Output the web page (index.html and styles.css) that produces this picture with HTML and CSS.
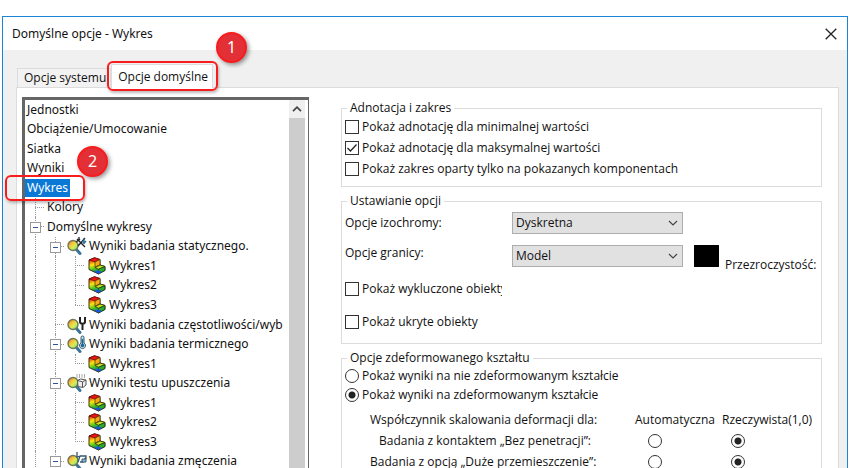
FILE: index.html
```html
<!DOCTYPE html>
<html lang="pl">
<head>
<meta charset="utf-8">
<title>Domyślne opcje - Wykres</title>
<link rel="stylesheet" href="styles.css">
</head>
<body>
<svg class="defs" aria-hidden="true">
  <defs>
    <linearGradient id="lens" x1="0" y1="0" x2="1" y2="1">
      <stop offset="0" stop-color="#f04a3c"/><stop offset=".35" stop-color="#f8c23a"/>
      <stop offset=".6" stop-color="#d8ee50"/><stop offset="1" stop-color="#4ccfb0"/>
    </linearGradient>
    <linearGradient id="heat" x1="0" y1="0" x2=".35" y2="1">
      <stop offset="0" stop-color="#e81010"/><stop offset=".25" stop-color="#f06a10"/>
      <stop offset=".45" stop-color="#f8e810"/><stop offset=".75" stop-color="#38c020"/>
      <stop offset="1" stop-color="#1048d8"/>
    </linearGradient>
    <symbol id="glass" viewBox="0 0 20 18">
      <path d="M9 12l4 4.500" stroke="#3a7498" stroke-width="3" stroke-linecap="round"/>
      <circle cx="6" cy="8.500" r="5" fill="url(#lens)" stroke="#6b7a58" stroke-width="1.400"/>
    </symbol>
    <symbol id="plot" viewBox="0 0 20 18">
      <path d="M2 3L7.500.8 13 2.500V8l5 1.500v4L11.500 17 2 12.500z" fill="url(#heat)" stroke="#3a3010"/>
      <path d="M2 3L7.500.8 13 2.500 8 5z" fill="#f01414" stroke="#701010" stroke-width=".8"/>
      <path d="M8 5l5-2.500V8l-3 1.200-2 1.300z" fill="#f8a818" stroke="#403808" stroke-width=".7"/>
      <path d="M8 10.500l3.500 1.800L18 9.500 13 8z" fill="#c8e020" stroke="#403808" stroke-width=".9"/>
      <path d="M11.500 12.300v4.500l6.300-3.300V9.700z" fill="#2cab2c" stroke="#184820" stroke-width=".8"/>
      <path d="M7.500 14.800l4 2 3.500-1.700-3.500-1.500z" fill="#1a55dc"/>
    </symbol>
  </defs>
</svg>

<main class="window">
  <header class="titlebar">
    <h1>Domyślne opcje - Wykres</h1>
    <button class="close" type="button" aria-label="Zamknij">
      <svg viewBox="0 0 12 12" width="12" height="12"><path d="M.7.7l10.600 10.600M11.300.7L.7 11.300" stroke="#222" stroke-width="1.300"/></svg>
    </button>
  </header>

  <div class="client">
    <nav class="tabs">
      <button class="tab" type="button">Opcje systemu</button>
      <div class="tab-wrap">
        <button class="tab active" type="button">Opcje domyślne</button>
        <span class="frame frame-tab"></span>
        <span class="badge badge-tab">1</span>
      </div>
    </nav>

    <section class="page">
      <div class="tree">
        <ul class="rows">
          <li><span class="text">Jednostki</span></li>
          <li><span class="text">Obciążenie/Umocowanie</span></li>
          <li><span class="text">Siatka</span></li>
          <li><span class="text">Wyniki</span></li>
          <li><span class="text selected">Wykres</span></li>
          <li><i class="line tee"></i><span class="text">Kolory</span></li>
          <li><i class="line tee box"></i><span class="text">Domyślne wykresy</span></li>
          <li><i class="line"></i><i class="line tee box"></i><svg class="icon" viewBox="0 0 20 18"><use href="#glass"/><path d="M10 2l8 8M18 1l-7 8M12 0v4M9 5l4-3" stroke="#222" stroke-width="1.300" fill="none"/><path d="M17 1v5M15 4l2 2.500L19 4" stroke="#2b6f9a" stroke-width="1.300" fill="none"/></svg><span class="text">Wyniki badania statycznego.</span></li>
          <li><i class="line"></i><i class="line"></i><i class="line tee"></i><svg class="icon"><use href="#plot"/></svg><span class="text">Wykres1</span></li>
          <li><i class="line"></i><i class="line"></i><i class="line tee"></i><svg class="icon"><use href="#plot"/></svg><span class="text">Wykres2</span></li>
          <li><i class="line"></i><i class="line"></i><i class="line tee last"></i><svg class="icon"><use href="#plot"/></svg><span class="text">Wykres3</span></li>
          <li><i class="line"></i><i class="line tee"></i><svg class="icon" viewBox="0 0 20 18"><use href="#glass"/><path d="M13 1v4.500c0 3 5 3 5 0V1M15.500 8v6" stroke="#222" stroke-width="2" fill="none"/></svg><span class="text">Wyniki badania częstotliwości/wyb</span></li>
          <li><i class="line"></i><i class="line tee box"></i><svg class="icon" viewBox="0 0 20 18"><use href="#glass"/><path d="M14 2.500a1.500 1.500 0 013 0V8a3 3 0 11-3 0z" fill="#bcdcea" stroke="#35586c"/><path d="M15.500 4v6.500" stroke="#1c6690" stroke-width="1.500"/><circle cx="15.500" cy="10.500" r="1.700" fill="#1c6690"/></svg><span class="text">Wyniki badania termicznego</span></li>
          <li><i class="line"></i><i class="line"></i><i class="line tee last"></i><svg class="icon"><use href="#plot"/></svg><span class="text">Wykres1</span></li>
          <li><i class="line"></i><i class="line tee box"></i><svg class="icon" viewBox="0 0 20 18"><use href="#glass"/><path d="M10.500 6.500l3-1.500 5.500 1v5l-3 2.500-5-1zM10.500 6.500l5 1.300L19 6M15.500 8v5" fill="#eee" stroke="#555"/><path d="M10 .5v3M12.500.5v3M15 .5v3M17.500.5v3" stroke="#555" stroke-dasharray="1 1"/></svg><span class="text">Wyniki testu upuszczenia</span></li>
          <li><i class="line"></i><i class="line"></i><i class="line tee"></i><svg class="icon"><use href="#plot"/></svg><span class="text">Wykres1</span></li>
          <li><i class="line"></i><i class="line"></i><i class="line tee"></i><svg class="icon"><use href="#plot"/></svg><span class="text">Wykres2</span></li>
          <li><i class="line"></i><i class="line"></i><i class="line tee last"></i><svg class="icon"><use href="#plot"/></svg><span class="text">Wykres3</span></li>
          <li><i class="line"></i><i class="line tee box"></i><svg class="icon" viewBox="0 0 20 18"><use href="#glass"/><path d="M10 0v5l3-1M13 4h6v3M13 4l-2 6M19 5l-3 5h-3" stroke="#35586c" stroke-width="1.300" fill="none"/><path d="M15 7h4v3h-4z" fill="#8dbad0" stroke="#35586c"/></svg><span class="text">Wyniki badania zmęczenia</span></li>
        </ul>
        <div class="scrollbar">
          <button type="button" aria-label="W górę"><svg viewBox="0 0 10 6" width="10" height="6"><path d="M1 5.200l4-4 4 4" stroke="#444" stroke-width="1.700" fill="none"/></svg></button>
          <div class="thumb"></div>
        </div>
        <span class="frame frame-row"></span>
        <span class="badge badge-row">2</span>
      </div>

      <form class="form">
        <fieldset class="checks">
          <legend>Adnotacja i zakres</legend>
          <label><input type="checkbox">Pokaż adnotację dla minimalnej wartości</label>
          <label><input type="checkbox" checked>Pokaż adnotację dla maksymalnej wartości</label>
          <label><input type="checkbox">Pokaż zakres oparty tylko na pokazanych komponentach</label>
        </fieldset>

        <fieldset class="settings">
          <legend>Ustawianie opcji</legend>
          <div class="setting">
            <label for="iso">Opcje izochromy:</label>
            <select id="iso"><option>Dyskretna</option></select>
          </div>
          <div class="setting">
            <label class="top" for="edge">Opcje granicy:</label>
            <select id="edge"><option>Model</option></select>
            <button class="swatch" type="button" aria-label="Kolor"></button>
            <span class="opacity">Przezroczystość:</span>
          </div>
          <label><input type="checkbox"><span class="cut">Pokaż wykluczone obiekty</span></label>
          <label><input type="checkbox">Pokaż ukryte obiekty</label>
        </fieldset>

        <fieldset class="shape">
          <legend>Opcje zdeformowanego kształtu</legend>
          <label><input type="radio" name="shape">Pokaż wyniki na nie zdeformowanym kształcie</label>
          <label><input type="radio" name="shape" checked>Pokaż wyniki na zdeformowanym kształcie</label>
          <table>
            <tr><th>Współczynnik skalowania deformacji dla:</th><th>Automatyczna</th><th>Rzeczywista(1,0)</th></tr>
            <tr><td>Badania z kontaktem „Bez penetracji”:</td><td><input type="radio" name="contact" aria-label="Automatyczna"></td><td><input type="radio" name="contact" aria-label="Rzeczywista" checked></td></tr>
            <tr><td>Badania z opcją „Duże przemieszczenie”:</td><td><input type="radio" name="large" aria-label="Automatyczna"></td><td><input type="radio" name="large" aria-label="Rzeczywista" checked></td></tr>
          </table>
        </fieldset>
      </form>
    </section>
  </div>
</main>
</body>
</html>
```
FILE: styles.css
```css
* { box-sizing: border-box; }

body {
  margin: 0;
  height: 100vh;
  overflow: hidden;
  background: #fff;
  color: #111;
  font: 12px/16px "Noto Sans", "Open Sans", sans-serif;
}

button, select, input { font: inherit; color: inherit; margin: 0; }
button { border: 0; padding: 0; background: none; }
.defs { position: absolute; width: 0; height: 0; }

.window {
  display: flex;
  flex-direction: column;
  height: 100vh;
  margin: 0 2px;
  padding-top: 16px;
}

.titlebar {
  display: flex;
  flex: none;
  align-items: center;
  justify-content: space-between;
  height: 34px;
  padding: 0 10px 0 9px;
  border: 1px solid #1a86d9;
  border-bottom: 0;
}
.titlebar h1 { margin: 0; font-size: 12px; font-weight: 400; }
.close { display: flex; }

.client {
  display: flex;
  flex: 1;
  flex-direction: column;
  min-height: 0;
  padding: 14px 8px 0 13px;
  border: solid #1a86d9;
  border-width: 0 1px;
  background: #f0f0f0;
}

.tabs, .form { font-family: "Open Sans", "Noto Sans", sans-serif; }

.tabs { display: flex; align-items: flex-end; height: 23px; padding-left: 1px; }
.tab {
  height: 19px;
  padding: 0 4px 0 6px;
  border: 1px solid #dcdcdc;
  border-bottom: 0;
  background: #f2f2f2;
  white-space: nowrap;
}
.tab-wrap { position: relative; }
.tab.active { display: block; height: 24px; margin-bottom: -1px; background: #fff; }

.page {
  display: flex;
  flex: 1;
  gap: 32px;
  min-height: 0;
  padding: 9px 16px 0 5px;
  border: 1px solid #dcdcdc;
  border-bottom: 0;
  background: #fff;
}

.tree {
  position: relative;
  display: flex;
  flex: 0 0 287px;
  border: solid #666;
  border-width: 3px 1px 0 3px;
  padding-right: 3px;
  margin-bottom: -3px;
}
.rows {
  display: grid;
  flex: 1;
  grid-template-rows: repeat(19, 1fr);
  min-width: 0;
  margin: 0;
  padding: 0;
  overflow: hidden;
  list-style: none;
}
.rows li { display: flex; align-items: center; min-width: 0; white-space: nowrap; }
.text { padding: 1px 2px; }
.selected { background: #0a78d7; color: #fff; }
.icon { flex: none; width: 20px; height: 18px; margin-left: 2px; fill: none; }

.line { position: relative; flex: none; align-self: stretch; width: 20px; }
.line::before {
  content: "";
  position: absolute;
  inset: 0 auto 0 10px;
  border-left: 1px dotted #999;
}
.line.last::before { bottom: 50%; }
.line.tee {
  background: repeating-linear-gradient(90deg, #999 0 1px, transparent 1px 2px) 10px 50% / 10px 1px no-repeat;
}
.line.box::after {
  content: "";
  position: absolute;
  top: 5px;
  left: 5px;
  width: 9px;
  height: 9px;
  border: 1px solid #999;
  background: linear-gradient(#2f4f9f, #2f4f9f) center / 5px 1px no-repeat #fff;
}

.scrollbar { display: flex; flex-direction: column; flex: 0 0 16px; background: #f0f0f0; }
.scrollbar button { display: flex; align-items: center; justify-content: center; height: 18px; }
.thumb { flex: 1; background: #cdcdcd; }

.frame {
  position: absolute;
  border: 2px solid #f81c1c;
  border-radius: 6px;
  box-shadow: 1px 2px 3px #0004;
  pointer-events: none;
}
.frame-tab { inset: -3px -5px -4px -4px; }
.frame-row { top: 75px; left: -20px; width: 80px; height: 26px; }

.badge {
  position: absolute;
  width: 31px;
  height: 31px;
  border: 2px solid #f81c1c;
  border-radius: 50%;
  background: #e23036;
  color: #fff;
  font-family: "Noto Sans", sans-serif;
  font-size: 16px;
  line-height: 27px;
  text-align: center;
  box-shadow: 2px 2px 4px #0006;
}
.badge-tab { top: -32px; right: -34px; }
.badge-row { top: 46px; left: 52px; }

.form { flex: 1; min-width: 0; display: flex; flex-direction: column; gap: 6px; padding-top: 3px; }
fieldset { flex: none; min-width: 0; margin: 0; padding: 0 3px; border: 1px solid #dcdcdc; }
legend { margin-left: 2px; padding: 0 3px; }
fieldset label { display: flex; align-items: center; gap: 3px; white-space: nowrap; }

input {
  appearance: none;
  flex: none;
  display: block;
  width: 14px;
  height: 14px;
  border: 1px solid #333;
  background: #fff;
}
input[type="radio"] { border-radius: 50%; }
input[type="radio"]:checked { background: radial-gradient(circle, #222 0 3px, #fff 4px); }
input[type="checkbox"]:checked {
  background: url("data:image/svg+xml,%3Csvg xmlns='http://www.w3.org/2000/svg' viewBox='0 0 12 12'%3E%3Cpath d='M1.500 6l3 3 6-6.500' fill='none' stroke='%23222' stroke-width='1.300'/%3E%3C/svg%3E");
}

.checks { padding: 0 3px 7px; }
.checks label { height: 21px; }

.settings { padding: 3px 3px 10px; }
.settings > label, .setting { height: 22px; }
.settings > label, .setting + .setting { margin-top: 11px; }
.setting { display: flex; }
.setting label { flex: 0 0 167px; }
.setting label.top { align-self: flex-start; }
.setting select {
  appearance: none;
  flex: 0 0 171px;
  padding: 0 3px;
  border: 1px solid #adadad;
  border-radius: 0;
  background: url("data:image/svg+xml,%3Csvg xmlns='http://www.w3.org/2000/svg' viewBox='0 0 10 6'%3E%3Cpath d='M1 1l4 4 4-4' fill='none' stroke='%23444' stroke-width='1.200'/%3E%3C/svg%3E") right 4px center / 10px 6px no-repeat #e1e1e1;
}
.swatch { flex: none; width: 25px; height: 22px; margin-left: 11px; background: #000; }
.opacity { align-self: flex-end; margin: 0 0 -6px 6px; white-space: nowrap; }
.cut { width: 140px; overflow: hidden; }

.shape > label { height: 19px; }
table { table-layout: fixed; width: 442px; margin: 5px 0 0 25px; border-collapse: collapse; white-space: nowrap; }
th, td { height: 21px; padding: 0; font-weight: 400; text-align: left; }
th:nth-child(1) { width: 265px; }
th:nth-child(2) { width: 87px; }
td:nth-child(1) { padding-right: 44px; text-align: right; }
td:nth-child(2) { padding-left: 13px; }
td:nth-child(3) { padding-left: 9px; }
```
